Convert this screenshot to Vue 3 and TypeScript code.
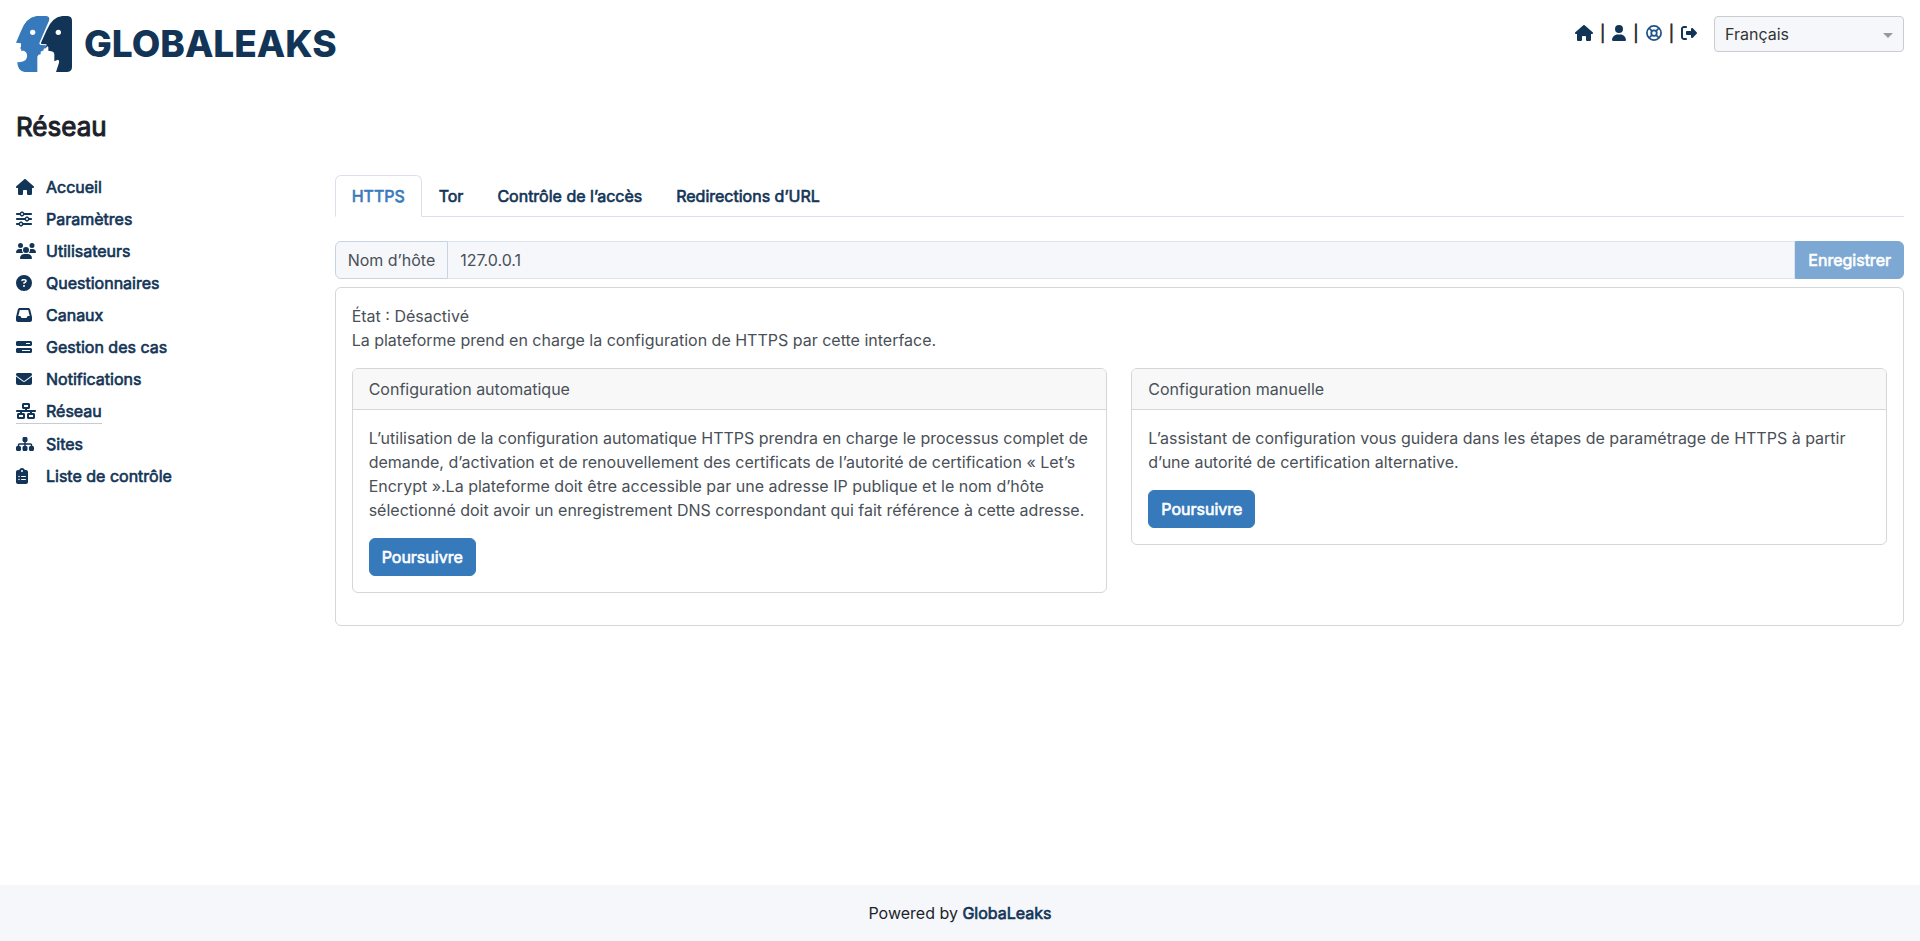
<script setup lang="ts">
import { ref } from 'vue'

interface Icon {
  width: number
  path: string
}

interface MenuItem {
  label: string
  icon: Icon
  active?: boolean
}

const house: Icon = {
  width: 576,
  path: 'M575.8 255.5c0 18-15 32.1-32 32.1l-32 0 .7 160.2c0 2.7-.2 5.4-.5 8.1l0 16.2c0 22.1-17.9 40-40 40l-16 0c-1.1 0-2.2 0-3.3-.1c-1.4 .1-2.8 .1-4.2 .1L416 512l-24 0c-22.1 0-40-17.9-40-40l0-24 0-64c0-17.7-14.3-32-32-32l-64 0c-17.7 0-32 14.3-32 32l0 64 0 24c0 22.1-17.9 40-40 40l-24 0-31.9 0c-1.5 0-3-.1-4.5-.2c-1.2 .1-2.4 .2-3.6 .2l-16 0c-22.1 0-40-17.9-40-40l0-112c0-.9 0-1.9 .1-2.8l0-69.7-32 0c-18 0-32-14-32-32.1c0-9 3-17 10-24L266.4 8c7-7 15-8 22-8s15 2 21 7L564.8 231.5c8 7 12 15 11 24z',
}
const user: Icon = {
  width: 448,
  path: 'M224 256A128 128 0 1 0 224 0a128 128 0 1 0 0 256zm-45.7 48C79.8 304 0 383.8 0 482.3C0 498.7 13.3 512 29.7 512l388.6 0c16.4 0 29.7-13.3 29.7-29.7C448 383.8 368.2 304 269.7 304l-91.4 0z',
}
const logout: Icon = {
  width: 512,
  path: 'M377.9 105.9L500.7 228.7c7.2 7.2 11.3 17.1 11.3 27.3s-4.1 20.1-11.3 27.3L377.9 406.1c-6.4 6.4-15 9.9-24 9.9c-18.7 0-33.9-15.2-33.9-33.9l0-62.1-128 0c-17.7 0-32-14.3-32-32l0-64c0-17.7 14.3-32 32-32l128 0 0-62.1c0-18.7 15.2-33.9 33.9-33.9c9 0 17.6 3.6 24 9.9zM160 96L96 96c-17.7 0-32 14.3-32 32l0 256c0 17.7 14.3 32 32 32l64 0c17.7 0 32 14.3 32 32s-14.3 32-32 32l-64 0c-53 0-96-43-96-96L0 128C0 75 43 32 96 32l64 0c17.7 0 32 14.3 32 32s-14.3 32-32 32z',
}

const menu: MenuItem[] = [
  { label: 'Accueil', icon: house },
  {
    label: 'Paramètres',
    icon: {
      width: 512,
      path: 'M0 416c0 17.7 14.3 32 32 32l54.7 0c12.3 28.3 40.5 48 73.3 48s61-19.7 73.3-48L480 448c17.7 0 32-14.3 32-32s-14.3-32-32-32l-246.7 0c-12.3-28.3-40.5-48-73.3-48s-61 19.7-73.3 48L32 384c-17.7 0-32 14.3-32 32zm128 0a32 32 0 1 1 64 0 32 32 0 1 1 -64 0zM320 256a32 32 0 1 1 64 0 32 32 0 1 1 -64 0zm32-80c-32.8 0-61 19.7-73.3 48L32 224c-17.7 0-32 14.3-32 32s14.3 32 32 32l246.7 0c12.3 28.3 40.5 48 73.3 48s61-19.7 73.3-48l54.7 0c17.7 0 32-14.3 32-32s-14.3-32-32-32l-54.7 0c-12.3-28.3-40.5-48-73.3-48zM192 128a32 32 0 1 1 0-64 32 32 0 1 1 0 64zm73.3-64C253 35.7 224.8 16 192 16s-61 19.7-73.3 48L32 64C14.3 64 0 78.3 0 96s14.3 32 32 32l86.7 0c12.3 28.3 40.5 48 73.3 48s61-19.7 73.3-48L480 128c17.7 0 32-14.3 32-32s-14.3-32-32-32L265.3 64z',
    },
  },
  {
    label: 'Utilisateurs',
    icon: {
      width: 640,
      path: 'M144 0a80 80 0 1 1 0 160A80 80 0 1 1 144 0zM512 0a80 80 0 1 1 0 160A80 80 0 1 1 512 0zM0 298.7C0 239.8 47.8 192 106.7 192l42.7 0c15.9 0 31 3.5 44.6 9.7c-1.3 7.2-1.9 14.7-1.9 22.3c0 38.2 16.8 72.5 43.3 96c-.2 0-.4 0-.7 0L21.3 320C9.6 320 0 310.4 0 298.7zM405.3 320c-.2 0-.4 0-.7 0c26.6-23.5 43.3-57.8 43.3-96c0-7.6-.7-15-1.9-22.3c13.6-6.3 28.7-9.7 44.6-9.7l42.7 0C592.2 192 640 239.8 640 298.7c0 11.8-9.6 21.3-21.3 21.3l-213.3 0zM224 224a96 96 0 1 1 192 0 96 96 0 1 1 -192 0zM128 485.3C128 411.7 187.7 352 261.3 352l117.3 0C452.3 352 512 411.7 512 485.3c0 14.7-11.9 26.7-26.7 26.7l-330.7 0c-14.7 0-26.7-11.9-26.7-26.7z',
    },
  },
  {
    label: 'Questionnaires',
    icon: {
      width: 512,
      path: 'M256 512A256 256 0 1 0 256 0a256 256 0 1 0 0 512zM169.8 165.3c7.9-22.3 29.1-37.3 52.8-37.3l58.3 0c34.9 0 63.1 28.3 63.1 63.1c0 22.6-12.1 43.5-31.7 54.8L280 264.4c-.2 13-10.9 23.6-24 23.6c-13.3 0-24-10.7-24-24l0-13.5c0-8.6 4.6-16.5 12.1-20.8l44.3-25.4c4.7-2.7 7.6-7.7 7.6-13.1c0-8.4-6.8-15.1-15.1-15.1l-58.3 0c-3.4 0-6.4 2.1-7.5 5.3l-.4 1.2c-4.4 12.5-18.2 19-30.6 14.6s-19-18.2-14.6-30.6l.4-1.2zM224 352a32 32 0 1 1 64 0 32 32 0 1 1 -64 0z',
    },
  },
  {
    label: 'Canaux',
    icon: {
      width: 512,
      path: 'M121 32C91.6 32 66 52 58.9 80.5L1.9 308.4C.6 313.5 0 318.7 0 323.9L0 416c0 35.3 28.7 64 64 64l384 0c35.3 0 64-28.7 64-64l0-92.1c0-5.2-.6-10.4-1.9-15.5l-57-227.9C446 52 420.4 32 391 32L121 32zm0 64l270 0 48 192-51.2 0c-12.1 0-23.2 6.8-28.6 17.7l-14.3 28.6c-5.4 10.8-16.5 17.7-28.6 17.7l-120.4 0c-12.1 0-23.2-6.8-28.6-17.7l-14.3-28.6c-5.4-10.8-16.5-17.7-28.6-17.7L73 288 121 96z',
    },
  },
  {
    label: 'Gestion des cas',
    icon: {
      width: 512,
      path: 'M448 160l-128 0 0-32 128 0 0 32zM48 64C21.5 64 0 85.5 0 112l0 64c0 26.5 21.5 48 48 48l416 0c26.5 0 48-21.5 48-48l0-64c0-26.5-21.5-48-48-48L48 64zM448 352l0 32-256 0 0-32 256 0zM48 288c-26.5 0-48 21.5-48 48l0 64c0 26.5 21.5 48 48 48l416 0c26.5 0 48-21.5 48-48l0-64c0-26.5-21.5-48-48-48L48 288z',
    },
  },
  {
    label: 'Notifications',
    icon: {
      width: 512,
      path: 'M48 64C21.5 64 0 85.5 0 112c0 15.1 7.1 29.3 19.2 38.4L236.8 313.6c11.4 8.5 27 8.5 38.4 0L492.8 150.4c12.1-9.1 19.2-23.3 19.2-38.4c0-26.5-21.5-48-48-48L48 64zM0 176L0 384c0 35.3 28.7 64 64 64l384 0c35.3 0 64-28.7 64-64l0-208L294.4 339.2c-22.8 17.1-54 17.1-76.8 0L0 176z',
    },
  },
  {
    label: 'Réseau',
    active: true,
    icon: {
      width: 640,
      path: 'M256 64l128 0 0 64-128 0 0-64zM240 0c-26.5 0-48 21.5-48 48l0 96c0 26.5 21.5 48 48 48l48 0 0 32L32 224c-17.7 0-32 14.3-32 32s14.3 32 32 32l96 0 0 32-48 0c-26.5 0-48 21.5-48 48l0 96c0 26.5 21.5 48 48 48l160 0c26.5 0 48-21.5 48-48l0-96c0-26.5-21.5-48-48-48l-48 0 0-32 256 0 0 32-48 0c-26.5 0-48 21.5-48 48l0 96c0 26.5 21.5 48 48 48l160 0c26.5 0 48-21.5 48-48l0-96c0-26.5-21.5-48-48-48l-48 0 0-32 96 0c17.7 0 32-14.3 32-32s-14.3-32-32-32l-256 0 0-32 48 0c26.5 0 48-21.5 48-48l0-96c0-26.5-21.5-48-48-48L240 0zM96 448l0-64 128 0 0 64L96 448zm320-64l128 0 0 64-128 0 0-64z',
    },
  },
  {
    label: 'Sites',
    icon: {
      width: 576,
      path: 'M208 80c0-26.5 21.5-48 48-48l64 0c26.5 0 48 21.5 48 48l0 64c0 26.5-21.5 48-48 48l-8 0 0 40 152 0c30.9 0 56 25.1 56 56l0 32 8 0c26.5 0 48 21.5 48 48l0 64c0 26.5-21.5 48-48 48l-64 0c-26.5 0-48-21.5-48-48l0-64c0-26.5 21.5-48 48-48l8 0 0-32c0-4.4-3.6-8-8-8l-152 0 0 40 8 0c26.5 0 48 21.5 48 48l0 64c0 26.5-21.5 48-48 48l-64 0c-26.5 0-48-21.5-48-48l0-64c0-26.5 21.5-48 48-48l8 0 0-40-152 0c-4.4 0-8 3.6-8 8l0 32 8 0c26.5 0 48 21.5 48 48l0 64c0 26.5-21.5 48-48 48l-64 0c-26.5 0-48-21.5-48-48l0-64c0-26.5 21.5-48 48-48l8 0 0-32c0-30.9 25.1-56 56-56l152 0 0-40-8 0c-26.5 0-48-21.5-48-48l0-64z',
    },
  },
  {
    label: 'Liste de contrôle',
    icon: {
      width: 384,
      path: 'M192 0c-41.8 0-77.4 26.7-90.5 64L64 64C28.7 64 0 92.7 0 128L0 448c0 35.3 28.7 64 64 64l256 0c35.3 0 64-28.7 64-64l0-320c0-35.3-28.7-64-64-64l-37.5 0C269.4 26.7 233.8 0 192 0zm0 64a32 32 0 1 1 0 64 32 32 0 1 1 0-64zM72 272a24 24 0 1 1 48 0 24 24 0 1 1 -48 0zm104-16l128 0c8.8 0 16 7.2 16 16s-7.2 16-16 16l-128 0c-8.8 0-16-7.2-16-16s7.2-16 16-16zM72 368a24 24 0 1 1 48 0 24 24 0 1 1 -48 0zm88 0c0-8.8 7.2-16 16-16l128 0c8.8 0 16 7.2 16 16s-7.2 16-16 16l-128 0c-8.8 0-16-7.2-16-16z',
    },
  },
]

const tabs = ['HTTPS', 'Tor', 'Contrôle de l’accès', 'Redirections d’URL']
const activeTab = ref('HTTPS')
const hostname = ref('127.0.0.1')
const language = ref('Français')

const setups = [
  {
    title: 'Configuration automatique',
    text: 'L’utilisation de la configuration automatique HTTPS prendra en charge le processus complet de demande, d’activation et de renouvellement des certificats de l’autorité de certification «\u00a0Let’s Encrypt\u00a0».La plateforme doit être accessible par une adresse IP publique et le nom d’hôte sélectionné doit avoir un enregistrement DNS correspondant qui fait référence à cette adresse.',
  },
  {
    title: 'Configuration manuelle',
    text: 'L’assistant de configuration vous guidera dans les étapes de paramétrage de HTTPS à partir d’une autorité de certification alternative.',
  },
]
</script>

<template>
  <div class="page">
    <header class="header">
      <a class="brand" href="#" aria-label="GlobaLeaks">
        <svg class="brand-mark" viewBox="0 0 168 168" aria-hidden="true">
          <path
            fill="#377abc"
            d="M62 0H91Q103 2 99 14L71 79Q68 86 76 87L89 88Q93 91 91 96L83 98V103L74 107V115Q66 115 64 122V168H26Q5 166 4 138Q20 140 29 132Q37 120 30 109L24 104H15L16 99L12 97L15 92V82L0 80L14 47Q29 5 62 0Z"
          />
          <circle cx="50" cy="49" r="8" fill="#fff" />
          <path
            fill="#123456"
            d="M139 0H155Q168 1 168 14V153Q168 166 154 168H120L129 140Q131 132 126 131L115 136V114Q114 107 106 106L97 104V94L95 90L92 94L90 91L92 85L76 84L75 80L92 43Q108 3 139 0Z"
          />
          <circle cx="127" cy="49" r="8" fill="#fff" />
        </svg>
        <span class="brand-name">GLOBALEAKS</span>
      </a>
      <div class="tools">
        <nav class="quick" aria-label="Raccourcis">
          <a href="#" aria-label="Accueil">
            <svg class="icon" :viewBox="`0 0 ${house.width} 512`"><path :d="house.path" /></svg>
          </a>
          <span class="bar">|</span>
          <a href="#" aria-label="Préférences">
            <svg class="icon" :viewBox="`0 0 ${user.width} 512`"><path :d="user.path" /></svg>
          </a>
          <span class="bar">|</span>
          <a class="help" href="#" aria-label="Aide">
            <svg class="icon ring" viewBox="0 0 512 512">
              <circle cx="256" cy="256" r="226" />
              <circle cx="256" cy="256" r="88" />
              <path d="M96 96L194 194M416 96L318 194M96 416L194 318M416 416L318 318" />
            </svg>
          </a>
          <span class="bar">|</span>
          <a href="#" aria-label="Déconnexion">
            <svg class="icon" :viewBox="`0 0 ${logout.width} 512`"><path :d="logout.path" /></svg>
          </a>
        </nav>
        <div class="language">
          <select v-model="language" aria-label="Langue">
            <option>Français</option>
          </select>
        </div>
      </div>
    </header>

    <h1 class="title">Réseau</h1>

    <div class="layout">
      <nav class="sidebar" aria-label="Administration">
        <a
          v-for="item in menu"
          :key="item.label"
          class="menu-link"
          :class="{ active: item.active }"
          href="#"
        >
          <span class="menu-icon">
            <svg class="icon" :viewBox="`0 0 ${item.icon.width} 512`" aria-hidden="true">
              <path :d="item.icon.path" />
            </svg>
          </span>
          <span>{{ item.label }}</span>
        </a>
      </nav>

      <main class="content">
        <div class="tabs" role="tablist">
          <button
            v-for="tab in tabs"
            :key="tab"
            class="tab"
            :class="{ selected: tab === activeTab }"
            type="button"
            role="tab"
            :aria-selected="tab === activeTab"
            @click="activeTab = tab"
          >
            {{ tab }}
          </button>
        </div>

        <form class="host" @submit.prevent>
          <label class="host-label" for="hostname">Nom d’hôte</label>
          <input id="hostname" v-model="hostname" class="host-input" type="text" disabled />
          <button class="button host-save" type="submit" disabled>Enregistrer</button>
        </form>

        <section class="card panel">
          <div class="status">
            <div>État : Désactivé</div>
            <div>La plateforme prend en charge la configuration de HTTPS par cette interface.</div>
          </div>
          <div class="setups">
            <article v-for="setup in setups" :key="setup.title" class="card">
              <div class="card-header">{{ setup.title }}</div>
              <div class="card-body">
                <p>{{ setup.text }}</p>
                <button class="button" type="button">Poursuivre</button>
              </div>
            </article>
          </div>
        </section>
      </main>
    </div>

    <footer class="footer">Powered by <a href="#">GlobaLeaks</a></footer>
  </div>
</template>

<style>
body {
  margin: 0;
  background: #fff;
}
</style>

<style scoped>
* {
  box-sizing: border-box;
}
.page {
  display: flex;
  flex-direction: column;
  min-height: 100vh;
  color: #1d1f2a;
  font-family: Inter, 'Liberation Sans', sans-serif;
  font-size: 16px;
  line-height: 24px;
}
button,
input,
select {
  font: inherit;
}
a {
  color: #123456;
  text-decoration: none;
}
.title,
.bar,
.menu-link,
.tab,
.button,
.footer a {
  font-weight: 400;
  -webkit-text-stroke: 0.04em currentColor;
}
.icon {
  display: block;
  height: 16px;
  fill: currentColor;
}
.header {
  display: flex;
  justify-content: space-between;
  align-items: flex-start;
  padding: 16px;
}
.brand {
  display: flex;
  align-items: center;
  gap: 12px;
}
.brand-mark {
  width: 56px;
  height: 56px;
}
.brand-name {
  font-size: 37px;
  font-weight: 800;
}
.tools {
  display: flex;
  align-items: flex-start;
  gap: 17px;
}
.quick {
  display: flex;
  align-items: center;
  gap: 7px;
  height: 34px;
}
.help {
  color: #1e5288;
}
.ring {
  fill: none;
  stroke: currentColor;
  stroke-width: 56;
}
.language {
  position: relative;
}
.language select {
  display: block;
  width: 190px;
  height: 36px;
  padding: 0 10px;
  border: 1px solid #ccc;
  border-radius: 4px;
  background: #f5f7fb;
  color: #333;
  appearance: none;
}
.language::after {
  position: absolute;
  top: 17px;
  right: 11px;
  border: 5px solid transparent;
  border-top-color: #999;
  border-bottom: 0;
  content: '';
  pointer-events: none;
}
.title {
  margin: 23px 16px 0;
  font-size: 26px;
  line-height: 32px;
}
.layout {
  display: grid;
  grid-template-columns: repeat(12, minmax(0, 1fr));
  gap: 24px;
  padding: 32px 16px;
}
.sidebar {
  display: flex;
  grid-column: span 2;
  flex-direction: column;
  align-items: flex-start;
  gap: 8px;
}
.menu-link {
  display: flex;
  align-items: center;
}
.menu-link.active {
  border-bottom: 1px solid #c3ccd8;
}
.menu-icon {
  width: 30px;
}
.content {
  grid-column: span 10;
}
.tabs {
  display: flex;
  border-bottom: 1px solid #dbe1ec;
}
.tab {
  margin-bottom: -1px;
  padding: 8px 16px;
  border: 1px solid transparent;
  border-radius: 6px 6px 0 0;
  background: none;
  color: #123456;
}
.tab.selected {
  border-color: #dbe1ec #dbe1ec #fff;
  background: #fff;
  color: #377abc;
}
.host {
  display: flex;
  margin: 24px 0 8px;
}
.host-label {
  padding: 6px 12px;
  border: 1px solid #c8d3e3;
  border-radius: 6px 0 0 6px;
  background: #f5f7fb;
  color: #495057;
}
.host-input {
  flex: 1;
  min-width: 0;
  padding: 6px 12px;
  border: 1px solid #dbe3ec;
  border-left: 0;
  border-radius: 0;
  background: #f5f7fb;
  color: #495057;
}
.button {
  padding: 6px 12px;
  border: 1px solid #377abc;
  border-radius: 6px;
  background: #377abc;
  color: #fff;
}
.host-save {
  border-radius: 0 6px 6px 0;
  opacity: 0.65;
}
.card {
  border: 1px solid #d5d6d8;
  border-radius: 6px;
  background: #fff;
  color: #495057;
}
.panel {
  padding: 16px;
}
.setups {
  display: grid;
  grid-template-columns: repeat(2, minmax(0, 1fr));
  align-items: start;
  gap: 24px;
  margin: 16px 0;
}
.card-header {
  padding: 8px 16px;
  border-bottom: 1px solid #d5d6d8;
  border-radius: 5px 5px 0 0;
  background: #f8f8f8;
}
.card-body {
  padding: 16px;
}
.card-body p {
  margin: 0 0 16px;
}
.footer {
  margin-top: auto;
  padding: 16px;
  background: #f5f7fb;
  text-align: center;
}
</style>
